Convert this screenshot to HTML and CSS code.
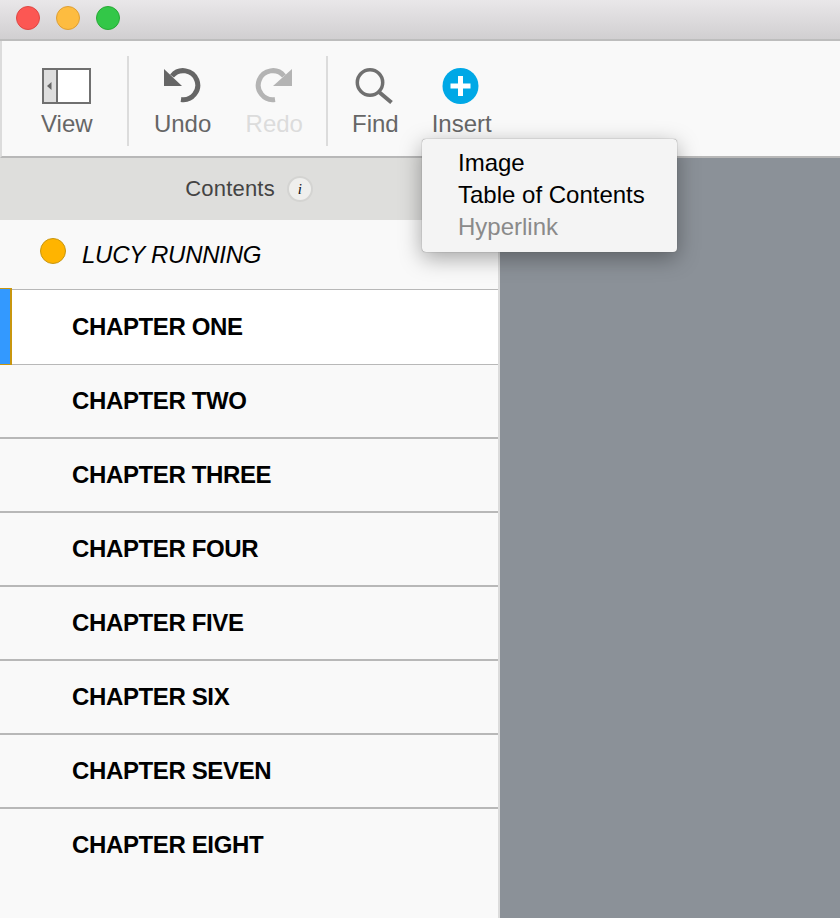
FILE: index.html
```html
<!doctype html>
<html lang="en">
  <head>
    <meta charset="UTF-8" />
    <title>Contents</title>
    <link rel="stylesheet" href="styles.css">
  </head>
  <body>
    <div class="titlebar">
      <span class="light light-close"></span>
      <span class="light light-min"></span>
      <span class="light light-max"></span>
    </div>
    <div class="toolbar">
      <div class="tool">
        <svg class="icon" width="51" height="36" viewBox="0 0 51 36">
          <rect x="2" y="1" width="47" height="34" fill="#fff" stroke="#707070" stroke-width="2" />
          <rect x="3" y="2" width="12" height="32" fill="#dedede" />
          <rect x="15" y="1" width="2" height="34" fill="#707070" />
          <polygon points="10.5,14 6,18 10.5,22" fill="#666" />
        </svg>
        <span>View</span>
      </div>
      <div class="sep"></div>
      <div class="tool">
        <svg class="icon" width="58" height="36" viewBox="0 0 58 36">
          <path d="M18 8 A14.5 14.5 0 1 1 27 31.5" fill="none" stroke="#666" stroke-width="5" />
          <polygon points="10,1 10,18 28,18" fill="#666" />
        </svg>
        <span>Undo</span>
      </div>
      <div class="tool tool-off">
        <svg class="icon" width="56" height="36" viewBox="0 0 56 36">
          <path d="M38 8 A14.5 14.5 0 1 0 29 31.5" fill="none" stroke="#b4b4b4" stroke-width="5" />
          <polygon points="46,1 46,18 27,18" fill="#b4b4b4" />
        </svg>
        <span>Redo</span>
      </div>
      <div class="sep"></div>
      <div class="tool tool-find">
        <svg class="icon" width="46" height="36" viewBox="0 0 46 36">
          <circle cx="18" cy="14.5" r="12.7" fill="none" stroke="#707070" stroke-width="3.5" />
          <line x1="27" y1="24" x2="39.5" y2="34.5" stroke="#707070" stroke-width="4" />
        </svg>
        <span>Find</span>
      </div>
      <div class="tool">
        <svg class="icon" width="59" height="36" viewBox="0 0 59 36">
          <circle cx="28.5" cy="18" r="18" fill="#00a8e6" />
          <rect x="18.5" y="15.5" width="20" height="5" fill="#fff" />
          <rect x="26" y="8" width="5" height="20" fill="#fff" />
        </svg>
        <span>Insert</span>
      </div>
    </div>
    <div class="main">
      <div class="sidebar">
        <div class="contents-head">
          <span class="contents-title">Contents</span>
          <span class="info">i</span>
        </div>
        <div class="book-row">
          <span class="book-dot"></span>
          <span>LUCY RUNNING</span>
        </div>
        <div class="chapter chapter-active">CHAPTER ONE<span class="marker"></span></div>
        <div class="chapter">CHAPTER TWO</div>
        <div class="chapter">CHAPTER THREE</div>
        <div class="chapter">CHAPTER FOUR</div>
        <div class="chapter">CHAPTER FIVE</div>
        <div class="chapter">CHAPTER SIX</div>
        <div class="chapter">CHAPTER SEVEN</div>
        <div class="chapter">CHAPTER EIGHT</div>
      </div>
      <div class="canvas"></div>
    </div>
    <div class="menu">
      <div class="menu-item">Image</div>
      <div class="menu-item">Table of Contents</div>
      <div class="menu-item menu-item-off">Hyperlink</div>
    </div>
  </body>
</html>
```

FILE: styles.css
```css
html,
body {
  height: 100%;
  margin: 0;
  overflow: hidden;
}
body {
  display: flex;
  flex-direction: column;
  position: relative;
  font-family: 'Liberation Sans', Arial, sans-serif;
  font-size: 24px;
  background: #8b9198;
  color: #000;
}
.titlebar {
  display: flex;
  align-items: center;
  gap: 16px;
  height: 41px;
  padding: 0 16px 3px;
  box-sizing: border-box;
  flex: none;
  background: linear-gradient(#e9e7e9, #d1cfd1);
  border-bottom: 2px solid #bdbdbd;
}
.light {
  width: 24px;
  height: 24px;
  box-sizing: border-box;
  border-radius: 50%;
  border: 1px solid;
}
.light-close {
  background: #fc5753;
  border-color: #df4744;
}
.light-min {
  background: #fdbc40;
  border-color: #de9f34;
}
.light-max {
  background: #33c748;
  border-color: #27aa35;
}
.toolbar {
  display: flex;
  flex: none;
  height: 117px;
  box-sizing: border-box;
  padding: 27px 0 0 39px;
  background: #f9f9f9;
  border-left: 2px solid #dcdcdc;
  border-bottom: 2px solid #b8b8b8;
  color: #666;
}
.tool {
  display: flex;
  flex-direction: column;
  align-items: center;
  margin-right: 34px;
  line-height: 28px;
}
.tool .icon {
  display: block;
  margin-bottom: 6px;
}
.tool-off {
  color: #dcdcdc;
  margin-right: 23px;
}
.tool-find {
  margin-right: 33px;
}
.sep {
  width: 2px;
  height: 90px;
  margin: -12px 24px 0 0;
  background: #dcdcdc;
}
.tool:first-child + .sep {
  margin-right: 25px;
}
.main {
  display: flex;
  flex: 1;
  min-height: 0;
}
.sidebar {
  width: 498px;
  flex: none;
  background: #f9f9f9;
  border-right: 2px solid #dcdcdc;
}
.contents-head {
  display: flex;
  align-items: center;
  justify-content: center;
  gap: 12px;
  height: 62px;
  background: #dededc;
  color: #444;
  font-size: 22px;
}
.contents-title {
  letter-spacing: 0.2px;
}
.info {
  display: flex;
  align-items: center;
  justify-content: center;
  width: 26px;
  height: 26px;
  box-sizing: border-box;
  border-radius: 50%;
  border: 2px solid #d4d4d2;
  background: #efefed;
  color: #111;
  font-family: 'Liberation Serif', serif;
  font-style: italic;
  font-size: 15px;
}
.book-row {
  display: flex;
  align-items: center;
  gap: 16px;
  height: 70px;
  box-sizing: border-box;
  padding-left: 40px;
  border-bottom: 1px solid #b8b8b8;
  font-style: italic;
  letter-spacing: -0.25px;
}
.book-dot {
  width: 26px;
  height: 26px;
  box-sizing: border-box;
  margin-top: -7px;
  border-radius: 50%;
  background: #ffb400;
  border: 1.5px solid #c8960f;
}
.chapter {
  display: flex;
  align-items: center;
  position: relative;
  height: 74px;
  box-sizing: border-box;
  padding-left: 72px;
  border-bottom: 2px solid #b8b8b8;
  font-weight: bold;
  letter-spacing: -0.37px;
}
.chapter:last-child {
  border-bottom: 0;
  padding-bottom: 2px;
}
.chapter-active {
  height: 75px;
  border-bottom-width: 1px;
  background: #fff;
}
.marker {
  position: absolute;
  left: 0;
  top: -2px;
  bottom: -1px;
  width: 12px;
  box-sizing: border-box;
  background: #3399ff;
  border: 1px solid #c8960f;
  border-left: 0;
  border-right-width: 2px;
}
.menu {
  position: absolute;
  left: 422px;
  top: 139px;
  width: 255px;
  height: 113px;
  box-sizing: border-box;
  padding: 8px 0 0 36px;
  background: #f4f4f4;
  border-radius: 4px;
  box-shadow: 0 0 1px #555, 0 6px 22px rgba(0, 0, 0, 0.35);
}
.menu-item {
  line-height: 32px;
}
.menu-item-off {
  color: #8a8a8a;
}
```
